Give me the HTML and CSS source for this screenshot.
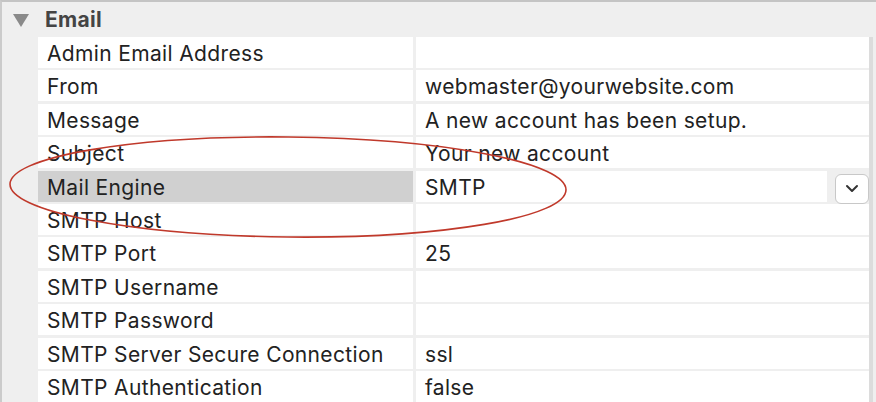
FILE: index.html
```html
<!DOCTYPE html>
<html>
  <head>
    <title>Email Settings</title>
    <link rel="stylesheet" href="styles.css">
  </head>
  <body>
    <div class="panel">
      <div class="group-head">
        <span class="caret"></span>
        <span class="group-title">Email</span>
      </div>
      <div class="props">
        <div class="key">Admin Email Address</div>
        <div class="val"></div>
        <div class="key">From</div>
        <div class="val">webmaster@yourwebsite.com</div>
        <div class="key">Message</div>
        <div class="val">A new account has been setup.</div>
        <div class="key">Subject</div>
        <div class="val">Your new account</div>
        <div class="key selected">Mail Engine</div>
        <div class="val combo">
          <span class="combo-text">SMTP</span>
          <button class="combo-btn">
            <svg width="14" height="9" viewBox="0 0 14 9"><path d="M2 2 L7 7 L12 2" fill="none" stroke="#333" stroke-width="2" stroke-linecap="round" stroke-linejoin="round"/></svg>
          </button>
        </div>
        <div class="key">SMTP Host</div>
        <div class="val"></div>
        <div class="key">SMTP Port</div>
        <div class="val">25</div>
        <div class="key">SMTP Username</div>
        <div class="val"></div>
        <div class="key">SMTP Password</div>
        <div class="val"></div>
        <div class="key">SMTP Server Secure Connection</div>
        <div class="val">ssl</div>
        <div class="key">SMTP Authentication</div>
        <div class="val">false</div>
      </div>
      <svg class="mark" width="876" height="402" viewBox="0 0 876 402">
        <ellipse cx="288" cy="187" rx="278" ry="50" transform="rotate(0.6 288 187)" fill="none" stroke="#c0392b" stroke-width="1.6"/>
      </svg>
    </div>
  </body>
</html>
```

FILE: styles.css
```css
body {
  margin: 0;
  background-color: #efefef;
  font-family: Inter, "Liberation Sans", sans-serif;
  color: #222;
}
.panel {
  position: relative;
  height: 402px;
  overflow: hidden;
  border-top: 2px solid #c4c4c4;
  border-left: 2px solid #cbcbcb;
  box-sizing: border-box;
}
.group-head {
  display: flex;
  align-items: center;
  height: 35px;
  padding-left: 11px;
}
.caret {
  width: 0;
  height: 0;
  border-left: 8px solid transparent;
  border-right: 8px solid transparent;
  border-top: 13px solid #8a8a8a;
  margin-right: 16px;
  margin-top: 2px;
}
.group-title {
  font-weight: bold;
  font-size: 21px;
  letter-spacing: 0.3px;
  color: #444;
}
.props {
  display: grid;
  grid-template-columns: 375px 453px;
  grid-auto-rows: 31px;
  column-gap: 3px;
  row-gap: 2.4px;
  margin-left: 36px;
  width: 831px;
  border-right: 4px solid #dcdcdc;
}
.key, .val {
  background-color: #fff;
  font-size: 21px;
  letter-spacing: 0.35px;
  line-height: 33px;
  padding-left: 9px;
  white-space: nowrap;
}
.key.selected {
  background-color: #d0d0d0;
}
.combo {
  display: flex;
  align-items: flex-start;
  background-color: transparent;
  padding-left: 0;
}
.combo-text {
  flex: 1;
  background-color: #fff;
  padding-left: 9px;
  height: 31px;
}
.combo-btn {
  width: 34px;
  height: 30px;
  margin-left: 8px;
  border: 1px solid #c8c8c8;
  border-radius: 6px;
  background-color: #fff;
  display: flex;
  align-items: center;
  justify-content: center;
  padding: 0;
  margin-top: 3px;
}
.mark {
  position: absolute;
  left: -2px;
  top: -2px;
  pointer-events: none;
}
```
